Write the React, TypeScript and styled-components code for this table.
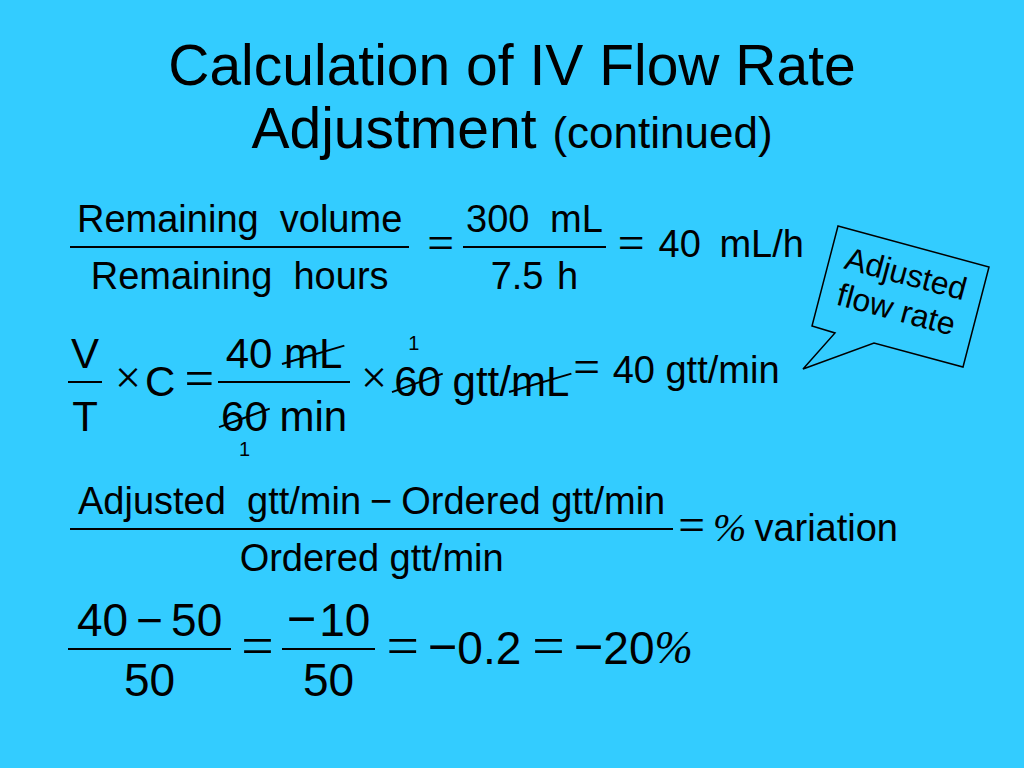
import React from "react";
import styled, { createGlobalStyle } from "styled-components";

const Global = createGlobalStyle`
  html, body { margin: 0; padding: 0; background: #33ccff; }
  body { font-family: "Liberation Sans", Arial, sans-serif; color: #000; }
`;

const Slide = styled.div`
  position: relative;
  width: 1024px;
  height: 768px;
  overflow: hidden;
  background: #33ccff;
  display: flex;
  flex-direction: column;
  font-family: "Liberation Sans", Arial, sans-serif;
`;

const Title = styled.h1`
  margin: 34px 0 0;
  font-weight: normal;
  font-size: 57px;
  line-height: 63px;
  text-align: center;
`;

const TitleSub = styled.span`
  font-size: 44px;
`;

const EqRow = styled.div<{ $top: number; $left: number; $size: number }>`
  display: flex;
  align-items: center;
  margin-top: ${(p) => p.$top}px;
  padding-left: ${(p) => p.$left}px;
  font-size: ${(p) => p.$size}px;
  line-height: 1;
  white-space: pre;
`;

const Frac = styled.div<{ $l?: number }>`
  display: inline-flex;
  flex-direction: column;
  align-items: center;
  margin-left: ${(p) => p.$l ?? 0}px;
`;

const Num = styled.div<{ $pad: number; $gap: number; $top?: number; $ws?: number }>`
  height: 1em;
  padding: ${(p) => p.$top ?? 0}px ${(p) => p.$pad}px ${(p) => p.$gap}px;
  word-spacing: ${(p) => p.$ws ?? 0}px;
`;

const Den = styled.div<{ $pad: number; $gap: number; $ws?: number }>`
  height: 1em;
  padding: ${(p) => p.$gap}px ${(p) => p.$pad}px 0;
  word-spacing: ${(p) => p.$ws ?? 0}px;
`;

const Bar = styled.div`
  align-self: stretch;
  height: 2px;
  background: #000;
`;

/* Stand-alone math operator (=, ×) between the parts of an equation */
const Op = styled.span<{ $l?: number; $r?: number; $scale?: number }>`
  display: inline-block;
  font-family: "Liberation Serif", "Times New Roman", serif;
  font-size: ${(p) => p.$scale ?? 1.25}em;
  margin: 0 ${(p) => p.$r ?? 0}px 0.16em ${(p) => p.$l ?? 0}px;
`;

/* Minus sign set inside a run of text */
const Sign = styled.span<{ $l?: number; $r?: number; $scale?: number }>`
  font-size: ${(p) => p.$scale ?? 1.1}em;
  line-height: 0;
  margin: 0 ${(p) => p.$r ?? 0}px 0 ${(p) => p.$l ?? 0}px;
`;

const Txt = styled.span<{ $l?: number; $up?: number; $fs?: number; $ws?: number }>`
  display: inline-block;
  margin-left: ${(p) => p.$l ?? 0}px;
  margin-bottom: ${(p) => (p.$up ?? 0) * 2}px;
  word-spacing: ${(p) => p.$ws ?? 0}px;
  ${(p) => (p.$fs ? `font-size: ${p.$fs}px;` : "")}
`;

const Pct = styled.span<{ $l?: number; $up?: number; $fs?: number }>`
  display: inline-block;
  font-family: "Liberation Serif", "Times New Roman", serif;
  font-style: italic;
  margin-left: ${(p) => p.$l ?? 0}px;
  margin-bottom: ${(p) => (p.$up ?? 0) * 2}px;
  ${(p) => (p.$fs ? `font-size: ${p.$fs}px;` : "")}
`;

const CancelWrap = styled.span`
  position: relative;
  display: inline-block;
`;

const Slash = styled.svg`
  position: absolute;
  left: -2px;
  top: 0;
  width: calc(100% + 4px);
  height: 100%;
  overflow: visible;
  pointer-events: none;
`;

const Note = styled.span<{ $below?: boolean; $left: number }>`
  position: absolute;
  left: ${(p) => p.$left}px;
  font-family: "Liberation Sans", Arial, sans-serif;
  font-size: 20px;
  line-height: 16px;
  ${(p) => (p.$below ? "top: calc(100% + 3px);" : "bottom: calc(100% + 10px);")}
`;

const Cancel: React.FC<{ children: React.ReactNode; note?: React.ReactNode }> = ({ children, note }) => (
  <CancelWrap>
    {children}
    <Slash aria-hidden="true">
      <line x1="0%" y1="74%" x2="100%" y2="30%" stroke="#000" strokeWidth="2" />
    </Slash>
    {note}
  </CancelWrap>
);

const Callout = styled.div`
  position: absolute;
  left: 800px;
  top: 220px;
  width: 200px;
  height: 160px;
`;

const CalloutShape = styled.svg`
  display: block;
  width: 200px;
  height: 160px;
`;

const CalloutText = styled.div`
  position: absolute;
  left: 21px;
  top: 35px;
  width: 160px;
  font-size: 32px;
  line-height: 37px;
  text-align: center;
  transform: rotate(15deg);
`;

export default function App() {
  return (
    <Slide>
      <Global />
      <Title>
        Calculation of IV Flow Rate
        <br />
        Adjustment <TitleSub>(continued)</TitleSub>
      </Title>

      <EqRow $top={36} $left={70} $size={38}>
        <Frac>
          <Num $pad={7} $gap={8}>Remaining  volume</Num>
          <Bar />
          <Den $pad={7} $gap={9}>Remaining  hours</Den>
        </Frac>
        <Op $l={18} $r={9}>=</Op>
        <Frac>
          <Num $pad={3} $gap={8} $ws={10}>300 mL</Num>
          <Bar />
          <Den $pad={3} $gap={9} $ws={3}>7.5 h</Den>
        </Frac>
        <Op $l={12}>=</Op>
        <Txt $l={14} $up={4} $ws={8}>40 mL/h</Txt>
      </EqRow>

      <EqRow $top={31} $left={68} $size={42}>
        <Frac>
          <Num $pad={3} $top={7} $gap={6}>V</Num>
          <Bar />
          <Den $pad={3} $gap={13}>T</Den>
        </Frac>
        <Op $l={13} $scale={1.1}>×</Op>
        <Txt $l={4}>C</Txt>
        <Op $l={9}>=</Op>
        <Frac $l={4}>
          <Num $pad={3} $top={7} $gap={6}>
            40 <Cancel>mL</Cancel>
          </Num>
          <Bar />
          <Den $pad={3} $gap={13}>
            <Cancel note={<Note $below $left={18}>1</Note>}>60</Cancel> min
          </Den>
        </Frac>
        <Op $l={11} $scale={1.1}>×</Op>
        <Txt $l={7}>
          <Cancel note={<Note $left={14}>1</Note>}>60</Cancel> gtt/<Cancel>mL</Cancel>
        </Txt>
        <Txt $fs={38} $up={10} $l={4}>
          <Op $r={2}>=</Op> 40 gtt/min
        </Txt>
      </EqRow>

      <EqRow $top={44} $left={70} $size={38}>
        <Frac>
          <Num $pad={8} $gap={8}>
            Adjusted  gtt/min<Sign $l={9} $r={9} $scale={1}>−</Sign>Ordered gtt/min
          </Num>
          <Bar />
          <Den $pad={8} $gap={9}>Ordered gtt/min</Den>
        </Frac>
        <Op $l={5}>=</Op>
        <Pct $l={8} $up={2} $fs={40}>%</Pct>
        <Txt $l={8} $up={2}>variation</Txt>
      </EqRow>

      <EqRow $top={20} $left={68} $size={46}>
        <Frac>
          <Num $pad={9} $gap={5}>
            40<Sign $l={8} $r={8} $scale={1}>−</Sign>50
          </Num>
          <Bar />
          <Den $pad={9} $gap={7}>50</Den>
        </Frac>
        <Op $l={10} $r={8}>=</Op>
        <Frac>
          <Num $pad={5} $gap={5}>
            <Sign $r={3}>−</Sign>10
          </Num>
          <Bar />
          <Den $pad={5} $gap={7}>50</Den>
        </Frac>
        <Op $l={11} $r={9}>=</Op>
        <Txt $up={2}>
          <Sign>−</Sign>0.2
        </Txt>
        <Op $l={11} $r={9}>=</Op>
        <Txt $up={2}>
          <Sign>−</Sign>20
        </Txt>
        <Pct $up={2}>%</Pct>
      </EqRow>

      <Callout>
        <CalloutShape viewBox="0 0 200 160" aria-hidden="true">
          <polygon
            points="38,6 189,47 163,147 74,123 3,149 35,113 12,106"
            fill="none"
            stroke="#000"
            strokeWidth="1.5"
            strokeLinejoin="miter"
          />
        </CalloutShape>
        <CalloutText>
          Adjusted
          <br />
          flow rate
        </CalloutText>
      </Callout>
    </Slide>
  );
}
